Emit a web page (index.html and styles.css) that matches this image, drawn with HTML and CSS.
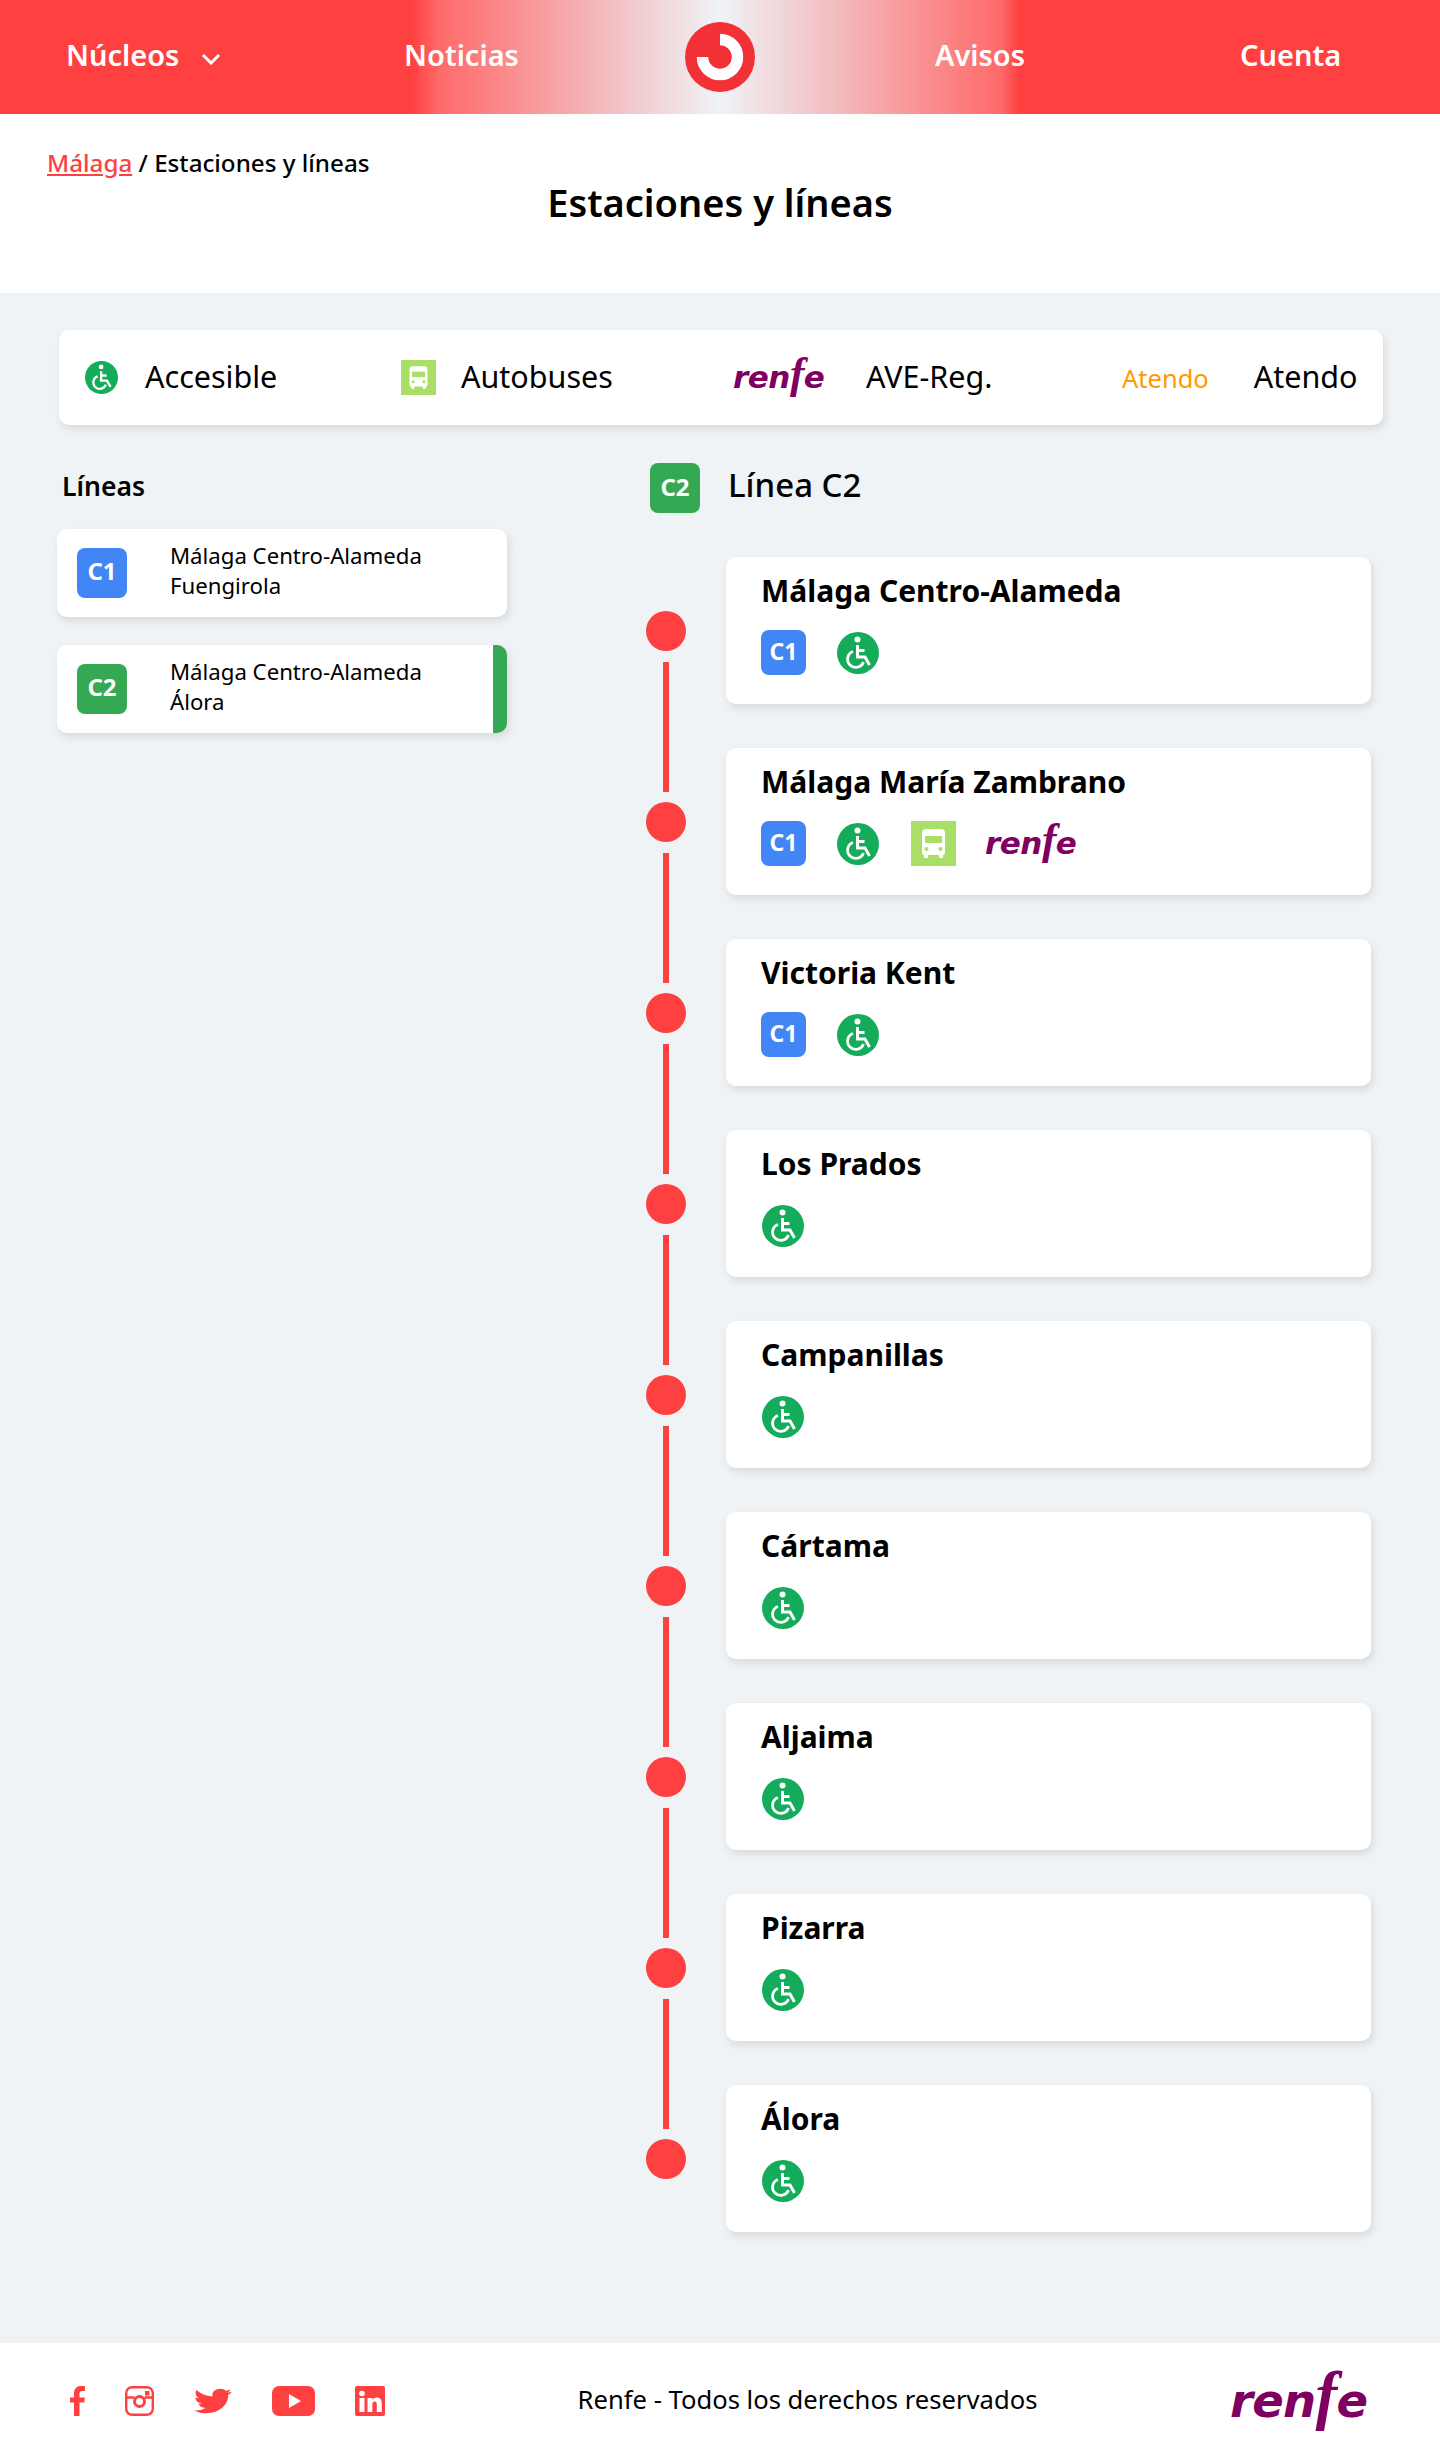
FILE: index.html
```html
<!DOCTYPE html>
<html lang="es">
<head>
  <meta charset="UTF-8" />
  <title>Estaciones y líneas - Renfe</title>
  <meta name="viewport" content="width=device-width, initial-scale=1.0" />
  <link rel="stylesheet" href="styles.css">
</head>
<body>
  <svg class="icon-defs" aria-hidden="true">
    <symbol id="i-access" viewBox="0 0 42 42">
      <circle cx="21" cy="21" r="21" fill="#14ab5a"/>
      <circle cx="20.5" cy="7.5" r="3" fill="#fff"/>
      <path d="M20.5 13v12h7.5l4.5 8M20.5 18.5h7" fill="none" stroke="#fff" stroke-width="3"/>
      <path d="M16 19.5a8.2 8.2 0 1 0 10.5 10.5" fill="none" stroke="#fff" stroke-width="2.8"/>
    </symbol>
    <symbol id="i-bus" viewBox="0 0 45 45">
      <rect width="45" height="45" fill="#a9de67"/>
      <path d="M15 8h15a4 4 0 0 1 4 4v20a2 2 0 0 1-2 2v3h-4v-3H17v3h-4v-3a2 2 0 0 1-2-2V12a4 4 0 0 1 4-4z" fill="#fff"/>
      <rect x="14" y="15" width="17" height="7" fill="#a9de67"/>
      <circle cx="15.5" cy="28" r="2" fill="#a9de67"/>
      <circle cx="29.5" cy="28" r="2" fill="#a9de67"/>
    </symbol>
  </svg>

  <header class="navbar">
    <a class="nav-item nav-drop" href="#">Núcleos
      <svg class="chevron" viewBox="0 0 20 12"><path d="M2 2l8 8 8-8" fill="none" stroke="#fff" stroke-width="3"/></svg>
    </a>
    <a class="nav-item" href="#">Noticias</a>
    <svg class="logo" viewBox="0 0 70 70">
      <circle cx="35" cy="35" r="35" fill="#f23136"/>
      <path d="M35 17.5A17.5 17.5 0 1 1 17.5 35" fill="none" stroke="#fff" stroke-width="11.5"/>
    </svg>
    <a class="nav-item" href="#">Avisos</a>
    <a class="nav-item" href="#">Cuenta</a>
  </header>

  <section class="page-head">
    <p class="crumbs"><a href="#">Málaga</a> / Estaciones y líneas</p>
    <h1>Estaciones y líneas</h1>
  </section>

  <main class="content">
    <div class="legend">
      <div class="legend-item item-access"><svg class="ic-legend"><use href="#i-access"/></svg><span class="legend-text">Accesible</span></div>
      <div class="legend-item item-bus"><svg class="ic-legend-bus"><use href="#i-bus"/></svg><span class="legend-text">Autobuses</span></div>
      <div class="legend-item item-ave"><span class="renfe">ren<i>f</i>e</span><span class="legend-text">AVE-Reg.</span></div>
      <div class="legend-item item-atendo"><span class="atendo">Atendo</span><span class="legend-text">Atendo</span></div>
    </div>

    <div class="columns">
      <aside class="lines">
        <h2>Líneas</h2>
        <a class="line-card" href="#">
          <span class="badge blue">C1</span>
          <span class="line-text">Málaga Centro-Alameda<br>Fuengirola</span>
        </a>
        <a class="line-card active" href="#">
          <span class="badge green">C2</span>
          <span class="line-text">Málaga Centro-Alameda<br>Álora</span>
        </a>
      </aside>

      <section class="detail">
        <div class="detail-head">
          <span class="badge green">C2</span>
          <h2>Línea C2</h2>
        </div>

        <div class="station">
          <div class="stop"></div>
          <div class="station-card">
            <h3>Málaga Centro-Alameda</h3>
            <div class="services">
              <span class="badge small blue">C1</span>
              <svg class="ic-access"><use href="#i-access"/></svg>
            </div>
          </div>
        </div>
        <div class="station">
          <div class="stop"></div>
          <div class="station-card">
            <h3>Málaga María Zambrano</h3>
            <div class="services">
              <span class="badge small blue">C1</span>
              <svg class="ic-access"><use href="#i-access"/></svg>
              <svg class="ic-bus"><use href="#i-bus"/></svg>
              <span class="renfe">ren<i>f</i>e</span>
            </div>
          </div>
        </div>
        <div class="station">
          <div class="stop"></div>
          <div class="station-card">
            <h3>Victoria Kent</h3>
            <div class="services">
              <span class="badge small blue">C1</span>
              <svg class="ic-access"><use href="#i-access"/></svg>
            </div>
          </div>
        </div>
        <div class="station">
          <div class="stop"></div>
          <div class="station-card">
            <h3>Los Prados</h3>
            <div class="services"><svg class="ic-access"><use href="#i-access"/></svg></div>
          </div>
        </div>
        <div class="station">
          <div class="stop"></div>
          <div class="station-card">
            <h3>Campanillas</h3>
            <div class="services"><svg class="ic-access"><use href="#i-access"/></svg></div>
          </div>
        </div>
        <div class="station">
          <div class="stop"></div>
          <div class="station-card">
            <h3>Cártama</h3>
            <div class="services"><svg class="ic-access"><use href="#i-access"/></svg></div>
          </div>
        </div>
        <div class="station">
          <div class="stop"></div>
          <div class="station-card">
            <h3>Aljaima</h3>
            <div class="services"><svg class="ic-access"><use href="#i-access"/></svg></div>
          </div>
        </div>
        <div class="station">
          <div class="stop"></div>
          <div class="station-card">
            <h3>Pizarra</h3>
            <div class="services"><svg class="ic-access"><use href="#i-access"/></svg></div>
          </div>
        </div>
        <div class="station">
          <div class="stop"></div>
          <div class="station-card">
            <h3>Álora</h3>
            <div class="services"><svg class="ic-access"><use href="#i-access"/></svg></div>
          </div>
        </div>
      </section>
    </div>
  </main>

  <footer class="footer">
    <div class="social">
      <svg class="s-fb" viewBox="0 0 15 30"><path d="M4 30V16.500H0v-5h4V7.500C4 2.500 6.800 0 11 0c1.800 0 3.300.1 4 .2v4.800h-2.700C10 5 9.500 6 9.500 7.700v3.800H15l-.8 5H9.500V30z" fill="#ff4040"/></svg>
      <svg class="s-ig" viewBox="0 0 29 30">
        <rect x="1.200" y="1.200" width="26.600" height="27.600" rx="6" fill="none" stroke="#ff4040" stroke-width="2.400"/>
        <path d="M1.500 11.500h8M19.500 11.500h8" stroke="#ff4040" stroke-width="2.400"/>
        <circle cx="14.500" cy="15.500" r="5" fill="none" stroke="#ff4040" stroke-width="3"/>
        <rect x="20" y="5" width="4.500" height="4.500" fill="#ff4040"/>
      </svg>
      <svg class="s-tw" viewBox="0 0 24 24" preserveAspectRatio="none"><path d="M23.953 4.570a10 10 0 01-2.825.775 4.958 4.958 0 002.163-2.723c-.951.555-2.005.959-3.127 1.184a4.920 4.920 0 00-8.384 4.482C7.690 8.095 4.067 6.130 1.640 3.162a4.822 4.822 0 00-.666 2.475c0 1.710.870 3.213 2.188 4.096a4.904 4.904 0 01-2.228-.616v.060a4.923 4.923 0 003.946 4.827 4.996 4.996 0 01-2.212.085 4.936 4.936 0 004.604 3.417 9.867 9.867 0 01-6.102 2.105c-.390 0-.779-.023-1.170-.067a13.995 13.995 0 007.557 2.209c9.053 0 13.998-7.496 13.998-13.985 0-.210 0-.420-.015-.630A9.935 9.935 0 0024 4.590z" fill="#ff4040"/></svg>
      <svg class="s-yt" viewBox="0 0 43 30"><rect width="43" height="30" rx="7" fill="#ff4040"/><path d="M17 8l12 7-12 7z" fill="#fff"/></svg>
      <svg class="s-in" viewBox="0 0 30 30"><rect width="30" height="30" rx="2" fill="#ff4040"/><circle cx="7" cy="7.500" r="2.800" fill="#fff"/><path d="M4.500 12h5v14h-5zM12.500 12h4.800v2c.8-1.400 2.400-2.400 4.500-2.400 3.600 0 5 2.200 5 6V26h-5v-7.500c0-1.800-.5-2.900-2-2.900-1.600 0-2.400 1.100-2.400 2.900V26h-4.900z" fill="#fff"/></svg>
    </div>
    <p class="copy">Renfe - Todos los derechos reservados</p>
    <span class="renfe big">ren<i>f</i>e</span>
  </footer>
</body>
</html>
```
FILE: styles.css
```css
* {
  box-sizing: border-box;
}

body {
  margin: 0;
  background: #eff3f6;
  font-family: 'Noto Sans', sans-serif;
  color: #000;
}

a {
  text-decoration: none;
  color: inherit;
}

.icon-defs {
  display: none;
}

.navbar {
  display: grid;
  grid-template-columns: 338px 281px 250px 305px 1fr;
  align-items: center;
  height: 114px;
  padding-left: 66px;
  background: linear-gradient(90deg, #ff4040 28.6%, #ff6a6a 30.5%, #f3b5b8 41%, #eff3f6 50%, #f3b5b8 59%, #ff6a6a 69.5%, #ff4040 70.8%);
}

.nav-item {
  padding-bottom: 6px;
  color: #fff;
  font-size: 29px;
  font-weight: 600;
}

.nav-drop {
  display: flex;
  align-items: center;
  gap: 22px;
}

.chevron {
  width: 20px;
  height: 12px;
  margin-top: 10px;
}

.logo {
  width: 70px;
  height: 70px;
}

.page-head {
  height: 179px;
  padding: 34px 47px 0;
  background: #fff;
}

.crumbs {
  margin: 0;
  font-size: 24.2px;
  line-height: 30px;
  font-weight: 500;
}

.crumbs a {
  color: #ff4040;
  text-decoration: underline;
}

.page-head h1 {
  margin: 0;
  font-size: 38px;
  line-height: 48px;
  font-weight: 600;
  text-align: center;
}

.content {
  padding: 37px 57px 111px;
}

.legend {
  display: flex;
  align-items: center;
  height: 95px;
  margin-left: 2px;
  background: #fff;
  border-radius: 10px;
  box-shadow: 2px 4px 8px rgba(0, 0, 0, 0.1);
  font-size: 30.5px;
}

.legend-item {
  display: flex;
  align-items: center;
}

.legend-text {
  padding-bottom: 4px;
}

.item-access {
  width: 342px;
  padding-left: 26px;
  gap: 27px;
}

.item-bus {
  width: 332px;
  gap: 25px;
}

.item-ave {
  width: 389px;
  gap: 40px;
}

.item-atendo {
  gap: 45px;
}

.ic-legend {
  width: 33px;
  height: 33px;
}

.ic-legend-bus {
  width: 35px;
  height: 35px;
}

.atendo {
  color: #ff9900;
  font-size: 25.5px;
}

.renfe {
  display: inline-block;
  width: 93px;
  color: #7f0060;
  font-family: 'DejaVu Sans', sans-serif;
  font-size: 31px;
  font-style: italic;
  font-weight: 700;
  letter-spacing: -0.5px;
  line-height: 1;
  white-space: nowrap;
}

.renfe i {
  font-family: 'Liberation Serif', serif;
  font-size: 1.4em;
  line-height: 0;
}

.renfe.big {
  width: 140px;
  font-size: 46.5px;
  letter-spacing: -0.7px;
}

.columns {
  display: grid;
  grid-template-columns: 450px 1fr;
  gap: 139px;
  margin-top: 38px;
  margin-right: 12px;
}

.lines h2 {
  margin: 0 0 16px 5px;
  padding-bottom: 4px;
  font-size: 26.5px;
  line-height: 46px;
  font-weight: 600;
}

.line-card {
  display: flex;
  align-items: center;
  gap: 43px;
  height: 88px;
  margin-bottom: 28px;
  padding-left: 20px;
  background: #fff;
  border-radius: 10px;
  box-shadow: 2px 4px 8px rgba(0, 0, 0, 0.1);
  font-size: 22.2px;
  line-height: 30px;
}

.line-text {
  padding-bottom: 4px;
}

.line-card.active {
  border-right: 14px solid #34a853;
}

.badge {
  flex: none;
  display: flex;
  align-items: center;
  justify-content: center;
  width: 50px;
  height: 50px;
  padding-bottom: 4px;
  border-radius: 8px;
  color: #fff;
  font-size: 24px;
  font-weight: 700;
}

.badge.small {
  width: 45px;
  height: 45px;
  font-size: 23px;
}

.blue {
  background: #4285f4;
}

.green {
  background: #34a853;
}

.detail-head {
  display: flex;
  align-items: center;
  gap: 28px;
  height: 50px;
  margin: 0 0 44px 4px;
}

.detail-head h2 {
  margin: 0;
  padding-bottom: 7px;
  font-size: 33px;
  font-weight: 500;
}

.station {
  display: flex;
  align-items: center;
  gap: 40px;
  margin-bottom: 44px;
}

.station:last-child {
  margin-bottom: 0;
}

.stop {
  position: relative;
  flex: none;
  width: 40px;
  height: 40px;
  border-radius: 50%;
  background: #ff4040;
}

.stop::after {
  content: "";
  position: absolute;
  left: 17px;
  top: 51px;
  width: 6px;
  height: 130px;
  background: #ff4040;
}

.station:last-child .stop::after {
  display: none;
}

.station-card {
  flex: 1;
  height: 147px;
  padding: 12px 35px 0;
  background: #fff;
  border-radius: 10px;
  box-shadow: 2px 4px 8px rgba(0, 0, 0, 0.1);
}

.station-card h3 {
  margin: 0 0 17px;
  font-size: 30px;
  line-height: 44px;
  font-weight: 700;
}

.services {
  display: flex;
  align-items: center;
  height: 45px;
}

.ic-access {
  width: 42px;
  height: 42px;
  margin-left: 1px;
}

.services .badge + .ic-access {
  margin-left: 31px;
}

.ic-bus {
  width: 45px;
  height: 45px;
  margin-left: 32px;
}

.services .renfe {
  margin-left: 29px;
}

.footer {
  display: flex;
  align-items: center;
  justify-content: space-between;
  height: 116px;
  padding: 0 70px;
  background: #fff;
}

.social {
  display: flex;
  align-items: center;
  gap: 40px;
}

.social svg {
  height: 30px;
}

.s-fb {
  width: 15px;
}

.s-ig {
  width: 29px;
}

.s-tw {
  width: 38px;
}

.s-yt {
  width: 43px;
}

.s-in {
  width: 30px;
}

.copy {
  margin: 0;
  padding-bottom: 3px;
  font-size: 25.6px;
}
```
